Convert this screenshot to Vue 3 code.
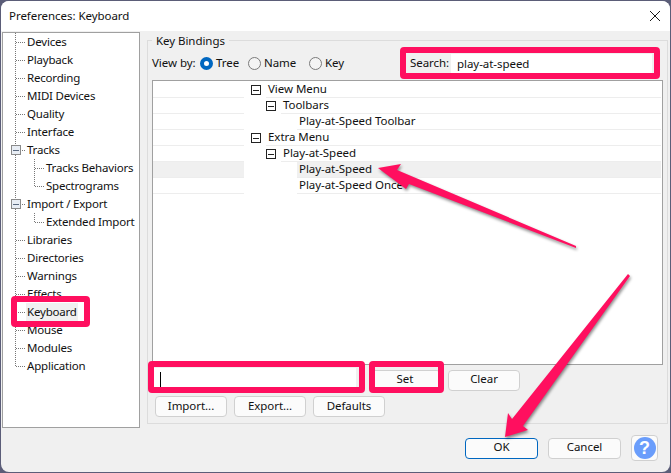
<script setup>
const rows = [
  { t: 'Devices', l: 0 }, { t: 'Playback', l: 0 }, { t: 'Recording', l: 0 }, { t: 'MIDI Devices', l: 0 },
  { t: 'Quality', l: 0 }, { t: 'Interface', l: 0 }, { t: 'Tracks', l: 0, box: true },
  { t: 'Tracks Behaviors', l: 1 }, { t: 'Spectrograms', l: 1, lastChild: true },
  { t: 'Import / Export', l: 0, box: true }, { t: 'Extended Import', l: 1, lastChild: true },
  { t: 'Libraries', l: 0 }, { t: 'Directories', l: 0 }, { t: 'Warnings', l: 0 }, { t: 'Effects', l: 0 },
  { t: 'Keyboard', l: 0, sel: true }, { t: 'Mouse', l: 0 }, { t: 'Modules', l: 0 }, { t: 'Application', l: 0, last: true },
]
const cmds = [
  { t: 'View Menu', d: 0 }, { t: 'Toolbars', d: 1 }, { t: 'Play-at-Speed Toolbar', d: 2 },
  { t: 'Extra Menu', d: 0 }, { t: 'Play-at-Speed', d: 1 }, { t: 'Play-at-Speed', d: 2, hi: true }, { t: 'Play-at-Speed Once', d: 2 },
]
</script>

<template>
  <div class="window">
    <header class="titlebar">
      <span>Preferences: Keyboard</span>
      <svg class="close" width="12" height="12" viewBox="0 0 12 12"><path d="M1 1l10 10M11 1L1 11" stroke="#1a1a1a" stroke-width="1" fill="none"/></svg>
    </header>
    <div class="main">
      <nav class="sidebar">
        <div v-for="r in rows" :key="r.t" class="node">
          <svg class="conn" :width="r.l ? 42 : 23" height="18">
            <line v-if="!r.l" x1="12.5" y1="0" x2="12.5" :y2="r.last ? 9 : 18" class="dot"/>
            <line v-if="!r.l" x1="13" y1="9.5" x2="22" y2="9.5" class="dot"/>
            <template v-if="r.l">
              <line x1="12.5" y1="0" x2="12.5" y2="18" class="dot"/>
              <line x1="31.5" y1="0" x2="31.5" :y2="r.lastChild ? 9 : 18" class="dot"/>
              <line x1="32" y1="9.5" x2="41" y2="9.5" class="dot"/>
            </template>
            <template v-if="r.box">
              <rect x="8.5" y="4.5" width="9" height="9" fill="#e8edf4" stroke="#8a8a8a"/>
              <line x1="10" y1="9.5" x2="16" y2="9.5" stroke="#5a6a80"/>
            </template>
          </svg>
          <span class="node-label" :class="{ sel: r.sel }">{{ r.t }}</span>
        </div>
      </nav>
      <section class="group">
        <div class="legend">Key Bindings</div>
        <div class="view-row">
          <span class="view-label">View by:</span>
          <span class="radio on"></span><span class="rlabel tree">Tree</span>
          <span class="radio"></span><span class="rlabel name">Name</span>
          <span class="radio"></span><span class="rlabel key">Key</span>
          <span class="search-label">Search:</span>
          <span class="search-input">play-at-speed</span>
        </div>
        <div class="list">
          <div v-for="(c, i) in cmds" :key="i" class="kb-row">
            <div class="kb-key" :class="{ hi: c.hi }"></div>
            <div class="kb-indent" :class="'d' + c.d">
              <svg v-if="c.d < 2" width="10" height="10"><rect x="0.5" y="0.5" width="9" height="9" fill="#fff" stroke="#222"/><line x1="2" y1="5.5" x2="8" y2="5.5" stroke="#222"/></svg>
            </div>
            <div class="kb-cmd" :class="{ hi: c.hi }">{{ c.t }}</div>
          </div>
        </div>
        <div class="bind-row">
          <div class="key-input"><i class="caret"></i></div>
          <button class="btn set">Set</button>
          <button class="btn clear">Clear</button>
        </div>
        <div class="io-row">
          <button class="btn">Import...</button>
          <button class="btn">Export...</button>
          <button class="btn">Defaults</button>
        </div>
      </section>
    </div>
    <footer class="footer">
      <button class="btn ok">OK</button>
      <button class="btn">Cancel</button>
      <button class="help"><span>?</span></button>
    </footer>

    <div class="mark m-search"></div>
    <div class="mark m-keyboard"></div>
    <div class="mark m-input"></div>
    <div class="mark m-set"></div>
    <svg class="arrows" width="671" height="473" viewBox="0 0 671 473">
      <polygon points="378,168 401,164 397,170 576,246 576,248 409,184 406,189"/>
      <polygon points="505,437 508,413 512,419 628,274 630,276 523,426 528,430"/>
    </svg>
  </div>
</template>

<style>
html, body { margin: 0; background: #5b5d78; overflow: hidden; }
</style>

<style scoped>
.window {
  position: relative;
  width: 669px;
  height: 471px;
  margin: 1px;
  background: #f0f0f0;
  border-radius: 8px;
  overflow: hidden;
  font: 11.5px/16px "Noto Sans", sans-serif;
  letter-spacing: -0.05px;
  color: #111;
  display: flex;
  flex-direction: column;
}
.titlebar {
  height: 30px;
  flex: none;
  background: #fff;
  display: flex;
  align-items: center;
  justify-content: space-between;
  padding: 0 9px 0 8px;
}
.main { display: flex; height: 396px; flex: none; }
.sidebar {
  width: 136px;
  height: 394px;
  margin: 1px 0 0 1px;
  background: #fff;
  border: 1px solid #a0a0a0;
  flex: none;
  letter-spacing: -0.2px;
}
.node { display: flex; align-items: center; height: 18px; }
.conn { flex: none; }
.dot { stroke: #777; stroke-dasharray: 1 1; shape-rendering: crispEdges; }
.node-label { padding: 0 1px; line-height: 18px; white-space: nowrap; }
.node-label.sel { background: #f0f0f0; }
.group {
  width: 511px;
  height: 382px;
  margin: 9px 0 0 7px;
  border: 1px solid #dcdcdc;
  padding: 0 4px;
  flex: none;
}
.legend { margin: -8px 0 0; padding: 0 4px; width: max-content; background: #f0f0f0; height: 16px; }
.view-row { display: flex; align-items: center; height: 20px; margin-top: 4px; }
.view-label { width: 48px; }
.radio { width: 13px; height: 13px; border: 1px solid #7a7a7a; border-radius: 50%; box-sizing: border-box; background: #f4f4f4; flex: none; }
.radio.on { border: 4px solid #0067c0; background: #fff; }
.rlabel { margin-left: 3px; }
.tree { width: 32px; }
.name { width: 45px; }
.key { width: 85px; }
.search-label { width: 41px; }
.search-input { padding-left: 6px; background: #fff; width: 195px; height: 19px; line-height: 19px; }
.list {
  height: 282px;
  margin-top: 7px;
  border: 1px solid #a0a0a0;
  background: #fff;
  padding: 1px 1px 0 0;
  width: 508px;
}
.kb-row { display: flex; height: 16px; }
.kb-key { width: 91px; flex: none; box-sizing: border-box; border-bottom: 1px solid #ededed; }
.kb-indent { display: flex; justify-content: flex-end; padding: 3px 5px 0 0; box-sizing: border-box; flex: none; }
.d0 { width: 22px; }
.d1 { width: 37px; }
.d2 { width: 53px; }
.kb-cmd { flex: 1; box-sizing: border-box; border-bottom: 1px solid #ededed; padding-left: 2px; line-height: 14px; }
.hi { background: #f0f0f0; }
.bind-row { display: flex; align-items: center; margin-top: 2px; height: 26px; }
.key-input { width: 204px; height: 24px; background: #fff; padding: 4px 0 0 8px; box-sizing: border-box; }
.caret { display: block; width: 1px; height: 15px; background: #000; }
.btn {
  width: 72px;
  height: 21px;
  padding: 0 0 2px;
  border: 1px solid #d0d0d0;
  border-radius: 4px;
  background: #fbfbfb;
  font: inherit;
  letter-spacing: inherit;
  color: #111;
  flex: none;
}
.set { margin-left: 13px; }
.clear { margin-left: 7px; }
.io-row { display: flex; gap: 7px; margin: 3px 0 0 3px; }
.footer {
  display: flex;
  align-items: center;
  justify-content: flex-end;
  gap: 10px;
  padding: 8px 12px 0 0;
}
.footer .btn { width: 73px; }
.ok { border-color: #0067c0; }
.help {
  width: 27px;
  height: 26px;
  padding: 0;
  border: 1px solid #d0d0d0;
  border-radius: 4px;
  background: #fbfbfb;
  display: flex;
  align-items: center;
  justify-content: center;
}
.help span {
  width: 22px;
  height: 22px;
  border-radius: 50%;
  background: #6a9dfb;
  color: #fff;
  font: bold 18px/22px "Liberation Sans", sans-serif;
  text-align: center;
}
.mark {
  position: absolute;
  box-sizing: border-box;
  border: 6px solid #ff0f5f;
  border-radius: 4px;
}
.m-search { left: 399px; top: 46px; width: 260px; height: 32px; }
.m-keyboard { left: 10px; top: 295px; width: 79px; height: 31px; }
.m-input { left: 147px; top: 360px; width: 217px; height: 32px; }
.m-set { left: 368px; top: 360px; width: 75px; height: 32px; }
.arrows {
  position: absolute;
  left: -1px;
  top: -1px;
  fill: #ff0f5f;
  filter: drop-shadow(1px 2px 1.5px rgba(0, 0, 0, 0.45));
  pointer-events: none;
}
</style>
